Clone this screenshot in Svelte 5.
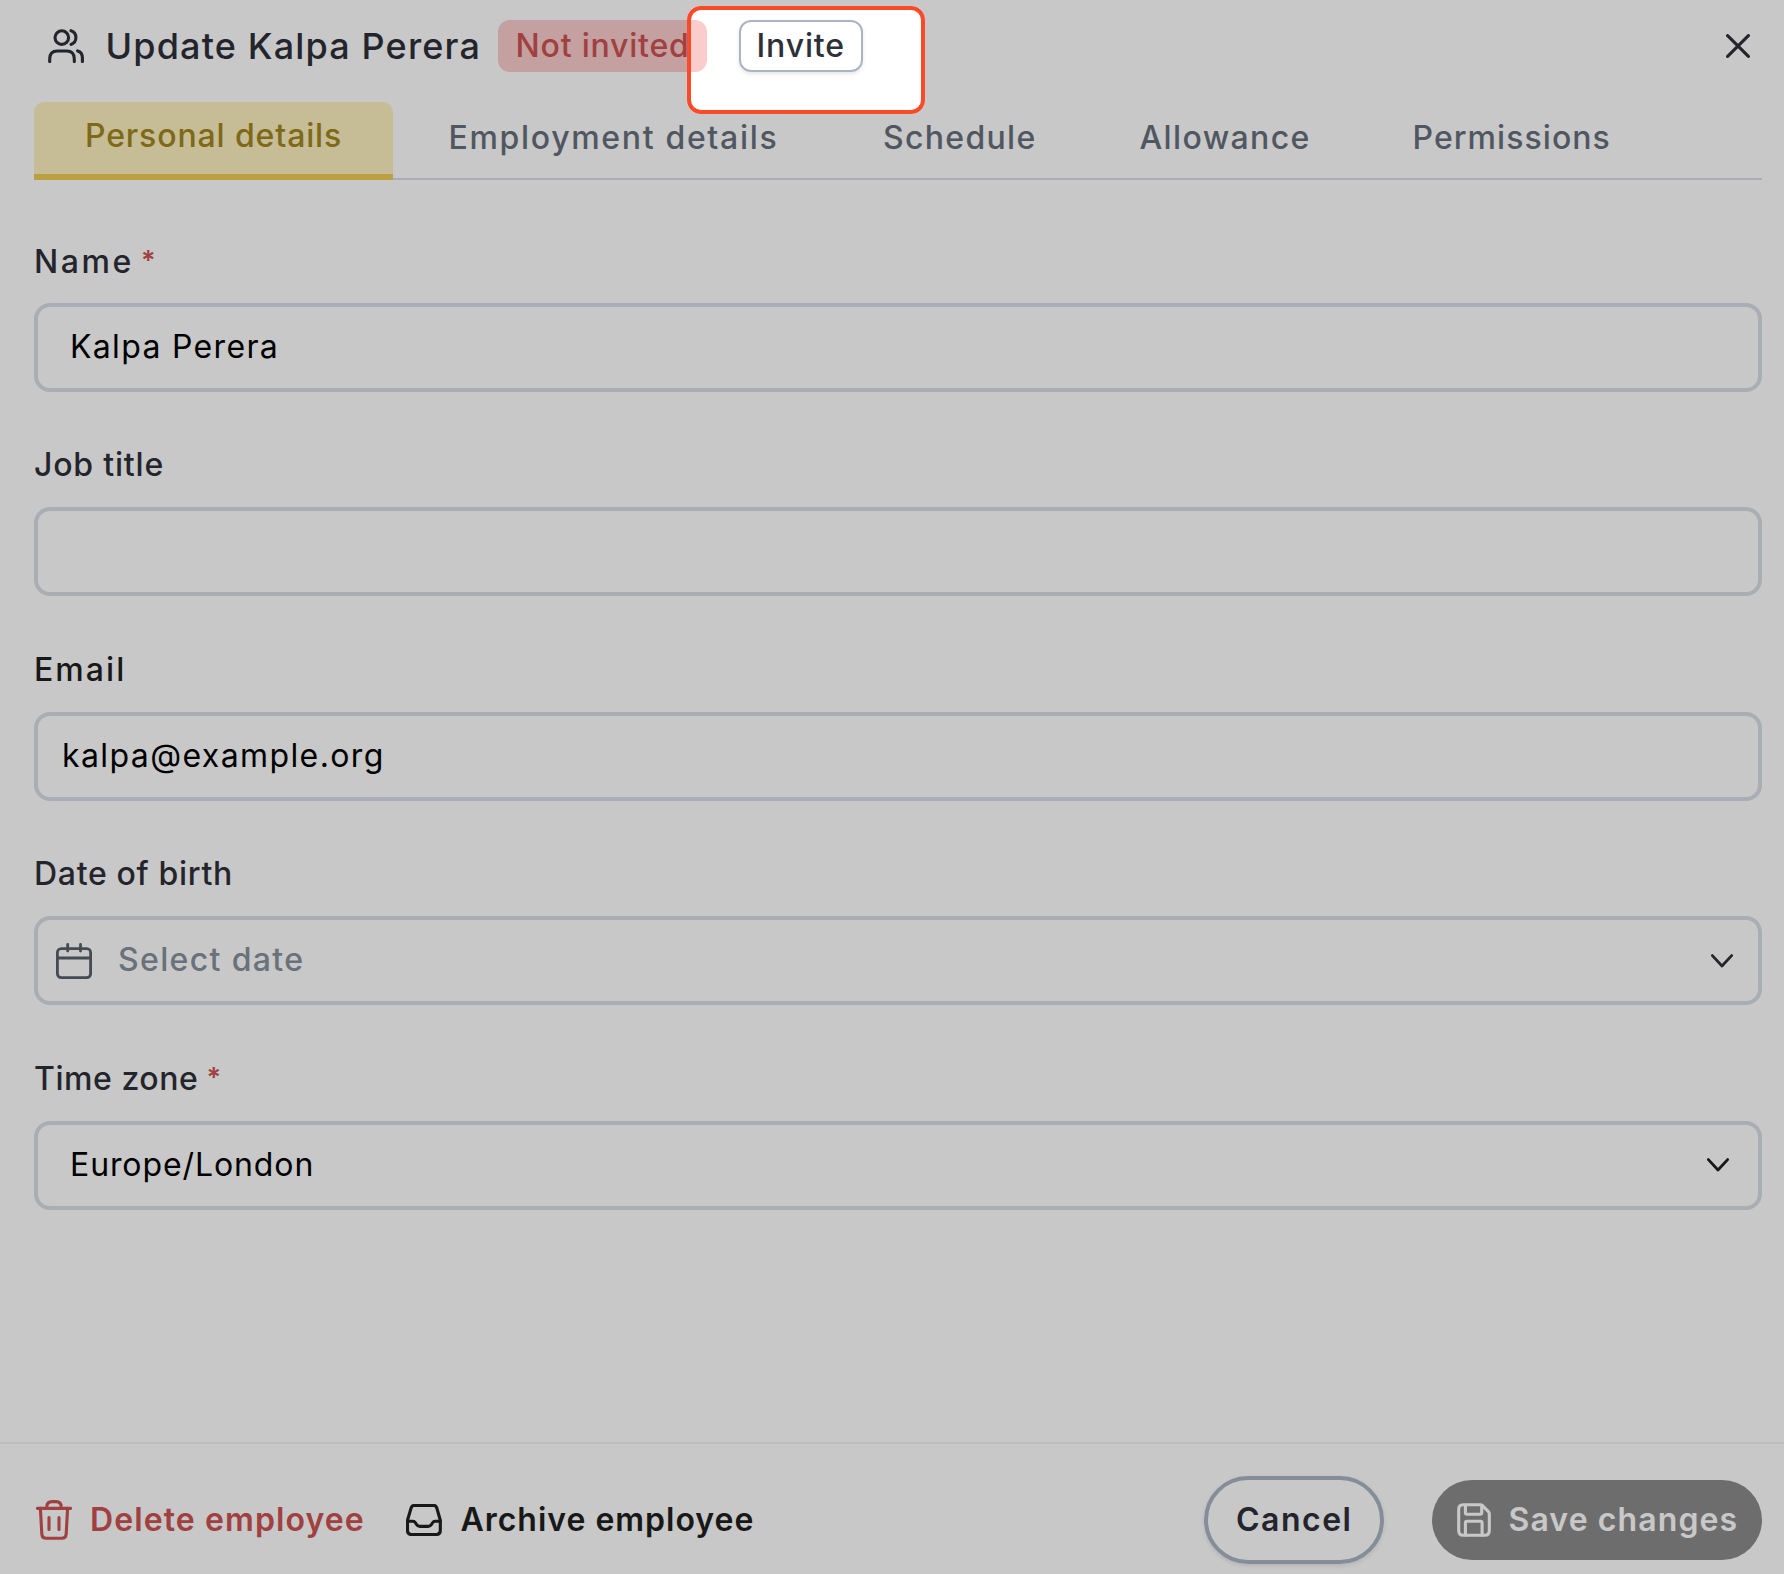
<script>
  const tabs = [
    { id: 'personal', label: 'Personal details' },
    { id: 'employment', label: 'Employment details' },
    { id: 'schedule', label: 'Schedule' },
    { id: 'allowance', label: 'Allowance' },
    { id: 'permissions', label: 'Permissions' }
  ];
  let active = $state('personal');

  const fields = [
    { id: 'name', label: 'Name', value: 'Kalpa Perera', required: true },
    { id: 'job', label: 'Job title', value: '' },
    { id: 'email', label: 'Email', value: 'kalpa@example.org' },
    { id: 'birth', label: 'Date of birth', value: 'Select date', calendar: true, chevron: true },
    { id: 'zone', label: 'Time zone', value: 'Europe/London', required: true, chevron: true }
  ];
</script>

<div class="panel">
  <header>
    <svg class="users" width="36" height="34" viewBox="0 0 36 34">
      <circle cx="13.8" cy="8.6" r="6.8" />
      <path d="M23 1.7c3 .9 4.9 3.5 4.9 6.900s-1.900 5.900-4.900 6.800" />
      <path d="M1.700 32.600v-2.600c0-5.300 2.300-8 7.600-8h9.400c5.300 0 7.600 2.700 7.600 8v2.600" />
      <path d="M29.600 21.900c3.200.8 4.800 3.300 4.800 7v3.700" />
    </svg>
    <h1>Update Kalpa Perera</h1>
    <span class="badge">Not invited</span>
    <button class="invite">Invite</button>
    <button class="close" aria-label="Close">
      <svg width="24" height="24" viewBox="0 0 24 24"><path d="M1.600 1.600l20.800 20.800M22.400 1.600L1.600 22.400" /></svg>
    </button>
  </header>

  <nav>
    {#each tabs as tab}
      <button class="tab {tab.id}" class:active={active === tab.id} onclick={() => (active = tab.id)}>{tab.label}</button>
    {/each}
  </nav>

  <main>
    {#each fields as field}
      <div class="field {field.id}">
        <div class="label"><span class="text">{field.label}</span>{#if field.required}<span class="star">*</span>{/if}</div>
        <div class="box">
          {#if field.calendar}
            <svg class="calendar" width="36" height="36" viewBox="0 0 36 36">
              <rect x="1.400" y="5.700" width="33.200" height="28.900" rx="3.800" />
              <path d="M1.400 15h33.200M11.700 1.500v6.600M24.500 1.500v6.600" />
            </svg>
          {/if}
          <span class="value">{field.value}</span>
          {#if field.chevron}
            <svg class="chevron" width="22" height="14" viewBox="0 0 22 14"><path d="M1.400 1.600l9.600 10.400 9.600-10.400" /></svg>
          {/if}
        </div>
      </div>
    {/each}
  </main>

  <footer>
    <button class="link delete">
      <svg width="36" height="40" viewBox="0 0 36 40">
        <path d="M1.500 8.400h33M10.800 8V6.900q0-5.300 5.200-5.300h4q5.200 0 5.200 5.300V8" />
        <path d="M4.400 8.400l1.400 25.500q.3 4.400 4.500 4.400h15.400q4.200 0 4.500-4.400l1.400-25.500M13 17.500v12M23 17.500v12" />
      </svg>
      <span>Delete employee</span>
    </button>
    <button class="link archive">
      <svg width="36" height="32" viewBox="0 0 36 32">
        <path d="M8.500 1.500h19q2.600 0 3.300 2.500l3.500 12.200v10.400q0 3.900-3.900 3.900H5.400q-3.900 0-3.900-3.900V16.200L5.100 4q.8-2.500 3.400-2.500z" />
        <path d="M1.500 17.200h5.300q1.700 0 2.600 1.500l1 1.600q1.200 2.100 3.400 2.100h8.400q2.200 0 3.400-2.100l1-1.600q.9-1.500 2.600-1.500h5.100" />
      </svg>
      <span>Archive employee</span>
    </button>
    <button class="cancel">Cancel</button>
    <button class="save">
      <svg width="34" height="34" viewBox="0 0 34 34">
        <path d="M6.200 1.700h17.300q1 0 1.700.7l6.200 6.200q.9.900.9 2.200v17q0 4.500-4.500 4.500H6.200q-4.500 0-4.500-4.500V6.200q0-4.500 4.500-4.500z" />
        <path d="M8.400 2v7.800q0 1.500 1.500 1.500h13.300q1.500 0 1.500-1.500V2.500M8.400 32V19.800q0-1.500 1.500-1.500h13.700q1.500 0 1.500 1.500V32" />
      </svg>
      <span>Save changes</span>
    </button>
  </footer>

  <div class="spotlight"></div>
</div>

<style>
  :global(body) { margin: 0; overflow: hidden; }
  * { box-sizing: border-box; }

  .panel {
    position: relative;
    display: flex;
    flex-direction: column;
    width: 1784px;
    height: 1574px;
    overflow: hidden;
    background: #fff;
    color: #2e3039;
    font: 500 32px/48px Inter, "Liberation Sans", sans-serif;
  }

  button { padding: 0; border: 0; background: none; color: inherit; font: inherit; text-align: left; white-space: nowrap; }
  svg { display: block; flex: none; fill: none; stroke: currentColor; stroke-width: 3.1; stroke-linecap: round; stroke-linejoin: round; }

  header { display: flex; flex: none; align-items: center; height: 92px; padding: 0 34px 0 48px; }
  h1 { width: 392.5px; margin: 0 0 0 21.5px; font-size: 36px; font-weight: 500; letter-spacing: 1.15px; white-space: nowrap; }
  .badge { width: 209px; height: 52px; padding-left: 17.5px; border-radius: 12px; background: #facccc; color: #cc5252; line-height: 52px; letter-spacing: 0.8px; white-space: nowrap; }
  .invite { width: 124px; height: 52px; margin-left: 32px; padding-left: 15.5px; border: 2px solid #a9b5c3; border-radius: 12px; box-shadow: 0 2px 4px rgba(0, 0, 0, 0.1); line-height: 48px; letter-spacing: 0.85px; }
  .close { margin-left: auto; }

  nav { display: flex; flex: none; height: 78px; margin: 10px 22px 0 34px; border-bottom: 2px solid #d6dee4; }
  .tab { height: 76px; padding: 12px 0 16px; color: #676f7c; }
  .tab.active { height: 78px; padding-top: 10px; padding-bottom: 14px; border-bottom: 6px solid #edcd52; background: linear-gradient(#fdf0be, #fdf0be); color: #a18721; border-radius: 10px 10px 0 0; }
  .personal { width: 359px; padding-left: 51px; letter-spacing: 0.87px; }
  .employment { width: 434px; padding-left: 55.5px; letter-spacing: 1.67px; }
  .schedule { width: 256px; padding-left: 56px; letter-spacing: 1.3px; }
  .allowance { width: 273px; padding-left: 56.5px; letter-spacing: 1.38px; }
  .permissions { padding-left: 56.5px; letter-spacing: 1.06px; }

  main { display: flex; flex: 1; flex-direction: column; gap: 50.45px; padding: 58px 22px 0 34px; }
  .label { display: flex; height: 48px; margin-bottom: 17px; line-height: 46px; white-space: nowrap; }
  .star { height: 42px; color: #cc5252; font-size: 27px; font-weight: 600; line-height: 43px; }
  .box { display: flex; align-items: center; height: 89px; padding: 0 25px 0 32px; border: 4px solid #d6dee4; border-radius: 16px; color: #000; }
  .value { height: 49px; font-weight: 400; white-space: nowrap; }
  .chevron { margin-left: auto; color: #2e3039; stroke-width: 2.8; }

  .name .label { line-height: 48px; }
  .name .text { letter-spacing: 2.6px; }
  .name .star { margin-left: 7px; line-height: 45px; }
  .name .value { letter-spacing: 1.32px; }
  .job .text { letter-spacing: 0.8px; }
  .email .label { color: #1f1f1f; letter-spacing: 2.05px; }
  .email .box { padding-left: 24px; }
  .email .value { letter-spacing: 1.4px; }
  .birth .text { letter-spacing: 0.68px; }
  .birth .box { padding-left: 18px; }
  .birth .value { margin-left: 26px; color: #86919d; font-weight: 500; letter-spacing: 1.35px; }
  .calendar { color: #56606a; stroke-width: 2.8; }
  .zone .text { letter-spacing: 0.55px; }
  .zone .star { margin-left: 8px; }
  .zone .box { padding-right: 29px; }
  .zone .value { letter-spacing: 0.9px; }
  .zone .chevron { color: #1f1f1f; }

  footer { display: flex; flex: none; align-items: center; height: 132px; padding: 22px 22px 0 36px; border-top: 2px solid #f1f1f1; font-weight: 600; }
  .link { display: flex; align-items: center; }
  .delete { gap: 18px; width: 330px; color: #cc5252; letter-spacing: 1.1px; }
  .archive { gap: 18.5px; margin-left: 40px; color: #1f1f1f; letter-spacing: 0.98px; }
  .cancel { width: 180px; height: 88px; margin-left: auto; padding-left: 28px; border: 4px solid #a8b6c2; border-radius: 44px; box-shadow: 0 2px 4px rgba(0, 0, 0, 0.1); letter-spacing: 1.5px; }
  .save { display: flex; align-items: center; gap: 17.5px; width: 330px; height: 80px; margin-left: 48px; padding-left: 25px; border-radius: 40px; background: #8c8c8c; color: #fff; letter-spacing: 1.1px; }

  /* Tour highlight: the shadow dims everything outside the frame. */
  .spotlight {
    position: absolute;
    top: 6px;
    left: 687px;
    width: 238px;
    height: 108px;
    border: 4px solid #fa4a27;
    border-radius: 14px;
    box-shadow: 0 0 0 2000px rgba(0, 0, 0, 0.2157);
    pointer-events: none;
  }
</style>
